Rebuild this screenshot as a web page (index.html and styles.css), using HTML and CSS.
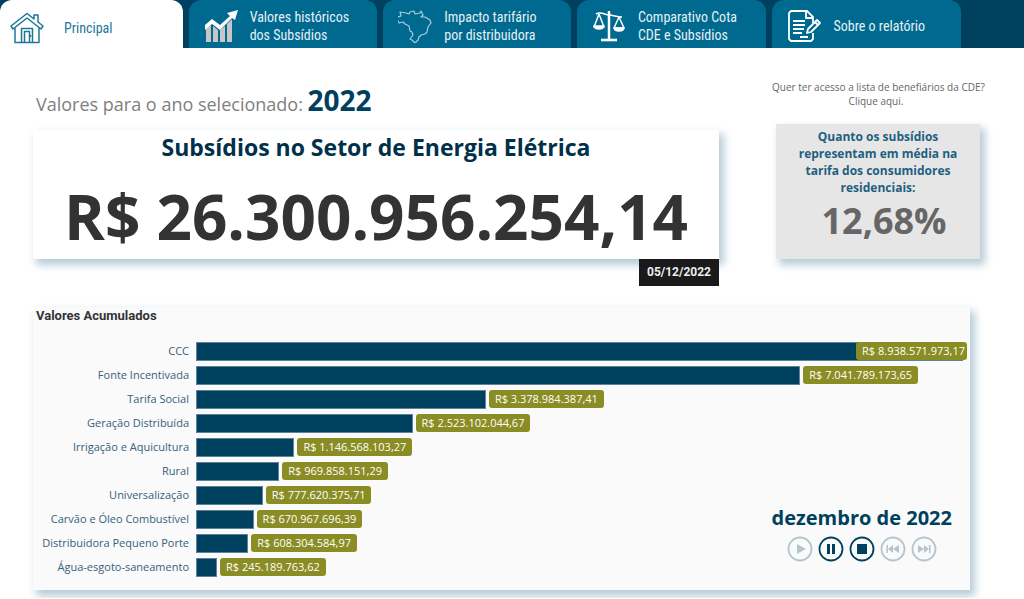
FILE: index.html
```html
<!DOCTYPE html>
<html lang="pt-BR">
<head>
<meta charset="utf-8">
<meta name="viewport" content="width=device-width, initial-scale=1">
<title>Subsídios no Setor de Energia Elétrica</title>
<link rel="stylesheet" href="styles.css">
</head>
<body>
<nav class="tabs" aria-label="Seções">
  <a class="tab tab-active" href="#principal" aria-current="page">
    <svg class="tab-icon" viewBox="0 0 34 34" fill="none" stroke="#1c7799" stroke-width="1.500" stroke-linejoin="round">
      <path d="M5 17v14.500h24V17"/><path d="M17 2.500 1 15l2 3L17 7l14 11 2-3-5-4V4h-4v4z"/><path d="M11.500 31V17.500h11V31M14.500 31V20.500h5V31"/><path d="M20.500 24v2"/>
    </svg>
    <span>Principal</span>
  </a>
  <a class="tab" href="#historico">
    <svg class="tab-icon" viewBox="0 0 34 34">
      <path fill="#c6c6c6" d="M2 20l5-4v17H2zM9 17l5 4v12H9zM16 21l5-4v16h-5zM23 15l5-5v23h-5z"/>
      <path fill="#fff" d="M1 16l7-6 8 6 10-9-3-3 11-3-3 10-3-2-12 12-8-6-7 6z"/>
    </svg>
    <span>Valores históricos<br>dos Subsídios</span>
  </a>
  <a class="tab" href="#impacto">
    <svg class="tab-icon" viewBox="0 0 34 34" fill="none" stroke="#a5cedd" stroke-width="1.200" stroke-linejoin="round">
      <path d="M8 4l3 1 1-2 4-1 1 3 5-1 1-2 2 4-2 2 4 0 5 3 1 3-3 4-1 5-2 2-4 1-2 2-1 3-3 3-3-3-2-1 3-4-1-3-2-1-1-5-4-2-2-2-4 1-2-4 1-2 3-1-1-4z"/>
    </svg>
    <span>Impacto tarifário<br>por distribuidora</span>
  </a>
  <a class="tab" href="#comparativo">
    <svg class="tab-icon" viewBox="0 0 34 34" fill="none" stroke="#fff" stroke-width="1.500" stroke-linejoin="round">
      <path stroke-width="2.500" d="M17 2v28"/><path stroke-width="2.600" d="M9 31h16"/>
      <path d="M4 5c5-3 9 1 13 1s8 2 13 2M7 5 2 18h10zM27 8l-5 11h10z"/>
      <path fill="#fff" d="M2 17h10c-1 4-9 4-10 0zM22 19h10c-1 4-9 4-10 0z"/>
    </svg>
    <span>Comparativo Cota<br>CDE e Subsídios</span>
  </a>
  <a class="tab" href="#sobre">
    <svg class="tab-icon" viewBox="0 0 34 34" fill="none" stroke="#fff" stroke-width="1.800" stroke-linejoin="round">
      <path d="M26 14V8l-6-6H4L2 4v26l2 2h20l2-2v-6M19 2v7h7"/>
      <path d="M6 12h12M6 16h12M6 20h11M6 24h9M13 28h8"/><path d="M20 24l1-4 9-9 3 3-9 9zM28 13l3 3"/>
    </svg>
    <span>Sobre o relatório</span>
  </a>
</nav>

<main class="page">
  <section class="summary">
    <div class="total">
      <p class="year-line">Valores para o ano selecionado: <strong class="year">2022</strong></p>
      <div class="card total-card">
        <h1 class="total-title">Subsídios no Setor de Energia Elétrica</h1>
        <p class="total-value">R$ 26.300.956.254,14</p>
        <time class="date-badge" datetime="2022-12-05">05/12/2022</time>
      </div>
    </div>
    <aside class="side">
      <a class="access-link" href="#beneficiarios">Quer ter acesso a lista de benefiários da CDE?<br>Clique aqui.</a>
      <div class="card share-card">
        <h2 class="share-title">Quanto os subsídios representam em média na tarifa dos consumidores residenciais:</h2>
        <p class="share-value">12,68%</p>
      </div>
    </aside>
  </section>

  <section class="card chart-card">
    <h2 class="chart-title">Valores Acumulados</h2>
    <ul class="chart">
      <li class="row"><span class="name">CCC</span><span class="track"><span class="bar" style="width:100%"></span><span class="value value-over">R$ 8.938.571.973,17</span></span></li>
      <li class="row"><span class="name">Fonte Incentivada</span><span class="track"><span class="bar" style="width:78.780%"></span><span class="value">R$ 7.041.789.173,65</span></span></li>
      <li class="row"><span class="name">Tarifa Social</span><span class="track"><span class="bar" style="width:37.800%"></span><span class="value">R$ 3.378.984.387,41</span></span></li>
      <li class="row"><span class="name">Geração Distribuída</span><span class="track"><span class="bar" style="width:28.230%"></span><span class="value">R$ 2.523.102.044,67</span></span></li>
      <li class="row"><span class="name">Irrigação e Aquicultura</span><span class="track"><span class="bar" style="width:12.830%"></span><span class="value">R$ 1.146.568.103,27</span></span></li>
      <li class="row"><span class="name">Rural</span><span class="track"><span class="bar" style="width:10.850%"></span><span class="value">R$ 969.858.151,29</span></span></li>
      <li class="row"><span class="name">Universalização</span><span class="track"><span class="bar" style="width:8.700%"></span><span class="value">R$ 777.620.375,71</span></span></li>
      <li class="row"><span class="name">Carvão e Óleo Combustível</span><span class="track"><span class="bar" style="width:7.510%"></span><span class="value">R$ 670.967.696,39</span></span></li>
      <li class="row"><span class="name">Distribuidora Pequeno Porte</span><span class="track"><span class="bar" style="width:6.810%"></span><span class="value">R$ 608.304.584,97</span></span></li>
      <li class="row"><span class="name">Água-esgoto-saneamento</span><span class="track"><span class="bar" style="width:2.740%"></span><span class="value">R$ 245.189.763,62</span></span></li>
    </ul>
    <div class="player">
      <p class="period">dezembro de 2022</p>
      <div class="controls">
        <button class="control control-off" type="button" aria-label="Reproduzir"><svg viewBox="0 0 26 26"><circle cx="13" cy="13" r="11.500"/><path d="M10 8l9 5-9 5z"/></svg></button>
        <button class="control" type="button" aria-label="Pausar"><svg viewBox="0 0 26 26"><circle cx="13" cy="13" r="11.500"/><path d="M9 8h3v10H9zM14 8h3v10h-3z"/></svg></button>
        <button class="control" type="button" aria-label="Parar"><svg viewBox="0 0 26 26"><circle cx="13" cy="13" r="11.500"/><path d="M8 8h10v10H8z"/></svg></button>
        <button class="control control-off" type="button" aria-label="Anterior"><svg viewBox="0 0 26 26"><circle cx="13" cy="13" r="11.500"/><path d="M6.500 9H8v8H6.500zM8 13l5-4v8zM13 13l6-4v8z"/></svg></button>
        <button class="control control-off" type="button" aria-label="Próximo"><svg viewBox="0 0 26 26"><circle cx="13" cy="13" r="11.500"/><path d="M18 9h1.500v8H18zM18 13l-5-4v8zM13 13 7 9v8z"/></svg></button>
      </div>
    </div>
  </section>
</main>
</body>
</html>
```
FILE: styles.css
```css
* { box-sizing: border-box; }

body {
  margin: 0;
  background: #fff;
  color: #333;
  font-family: "Open Sans", "Noto Sans", sans-serif;
}

h1, h2, p, ul { margin: 0; padding: 0; }

.tabs {
  display: grid;
  grid-template-columns: 183fr 189fr 188fr 190fr 189fr 57fr;
  column-gap: 6px;
  height: 48px;
  background: #00405f;
}

.tab {
  display: flex;
  align-items: center;
  gap: 12px;
  padding: 4px 0 0 15px;
  border-radius: 12px 12px 0 0;
  background: #00698f;
  color: #e4f1f5;
  font-family: "Liberation Sans Narrow", "Roboto Condensed", Roboto, sans-serif;
  font-size: 14px;
  line-height: 18px;
  text-decoration: none;
  white-space: nowrap;
}

.tab-active {
  gap: 20px;
  padding: 8px 0 0 10px;
  background: #fff;
  color: #1c7799;
}

.tab-icon { flex: none; width: 34px; height: 34px; }

.page { padding: 32px 54px 8px 33px; }

.card { box-shadow: 4px 5px 8px 1px #b7ccd6; }

.summary {
  display: grid;
  grid-template-columns: 686fr 208px;
  column-gap: 53px;
  margin-right: -10px;
}

.year-line {
  height: 50px;
  padding-left: 3px;
  color: #808080;
  font-size: 18px;
  line-height: 40px;
  white-space: nowrap;
}

.year { color: #00405f; font-size: 28px; }

.total-card {
  position: relative;
  height: 129px;
  background: #fff;
  text-align: center;
}

.total-title {
  color: #00304a;
  font-size: 23px;
  line-height: 34px;
}

.total-value {
  font-size: 62px;
  font-weight: 700;
  line-height: 104px;
  white-space: nowrap;
}

.date-badge {
  position: absolute;
  top: 129px;
  right: 0;
  width: 80px;
  background: #1a1a1a;
  color: #eee;
  font-family: Roboto, sans-serif;
  font-size: 12px;
  font-weight: 700;
  line-height: 27px;
}

.access-link {
  display: block;
  height: 44px;
  color: #666;
  font-size: 10px;
  line-height: 14px;
  text-align: center;
  text-decoration: none;
  white-space: nowrap;
}

.share-card {
  height: 135px;
  margin-left: 4px;
  padding: 4px 20px;
  background: #e6e6e6;
  text-align: center;
}

.share-title {
  color: #1f5f80;
  font-size: 12px;
  line-height: 17px;
}

.share-value {
  padding-left: 12px;
  color: #666;
  font-size: 36px;
  font-weight: 700;
  line-height: 50px;
}

.chart-card {
  position: relative;
  margin-top: 48px;
  padding: 0 7px 11px 0;
  background: #fafafa;
}

.chart-title {
  padding-left: 3px;
  color: #333;
  font-family: Roboto, sans-serif;
  font-size: 13px;
  line-height: 18px;
}

.chart { padding-top: 14px; list-style: none; }

.row {
  display: grid;
  grid-template-columns: 156px 1fr;
  column-gap: 7px;
  align-items: center;
  height: 24px;
}

.name {
  color: #35617a;
  font-size: 11px;
  line-height: 18px;
  text-align: right;
  white-space: nowrap;
}

.track {
  position: relative;
  display: flex;
  align-items: center;
  gap: 3px;
}

.bar {
  flex: none;
  height: 19px;
  border: 1px solid #5f8499;
  background: #00405f;
}

.value {
  padding: 0 6px;
  border-radius: 3px;
  background: #8a8c24;
  color: #fff;
  font-size: 11px;
  line-height: 18px;
  white-space: nowrap;
}

.value-over {
  position: absolute;
  right: -4px;
  padding-right: 2px;
}

.player {
  position: absolute;
  right: 18px;
  bottom: 28px;
  color: #00405f;
}

.period { font-size: 20px; font-weight: 700; line-height: 30px; }

.controls { display: flex; justify-content: center; gap: 5px; padding-top: 3px; }

.control {
  width: 26px;
  height: 26px;
  padding: 0;
  border: 0;
  background: none;
  color: #00405f;
  cursor: pointer;
}

.control svg { display: block; fill: currentColor; }
.control circle { fill: none; stroke: currentColor; stroke-width: 1.800; }
.control-off { color: #b3c6cf; }
```
